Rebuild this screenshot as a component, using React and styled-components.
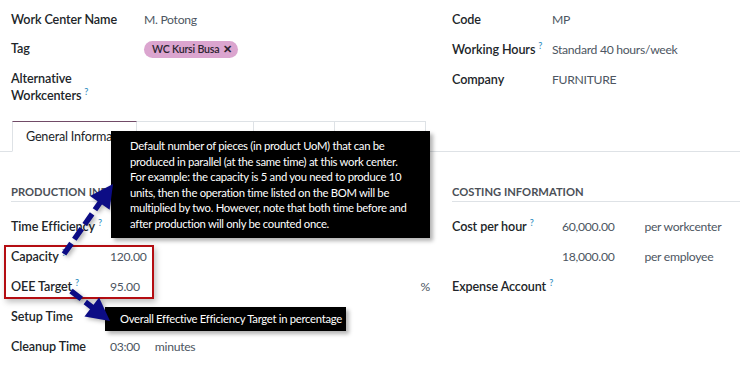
import React from 'react';
import styled, { createGlobalStyle } from 'styled-components';

const GlobalStyle = createGlobalStyle`
  html, body {
    margin: 0;
    padding: 0;
    background: #fff;
  }
  body {
    font-family: Lato, "Noto Sans", sans-serif;
    font-size: 13px;
    color: #212529;
  }
`;

const Page = styled.div`
  position: relative;
  width: 740px;
  height: 367px;
  overflow: hidden;
  padding-top: 11px;
  box-sizing: border-box;
`;

const TopGroup = styled.div`
  display: grid;
  grid-template-columns: 441px 1fr;
  padding-left: 11px;
`;

const FieldList = styled.div`
  display: flex;
  flex-direction: column;
  gap: ${(p) => p.$gap || 12}px;
`;

const Field = styled.div`
  display: grid;
  grid-template-columns: ${(p) => p.$labelWidth}px 1fr auto;
  align-items: start;
  line-height: 17px;
  white-space: nowrap;
`;

const Label = styled.div`
  font-size: 12.6px;
  font-weight: 600;
  letter-spacing: -0.1px;
  color: #212529;
`;

const Value = styled.div`
  font-size: 12.2px;
  letter-spacing: -0.3px;
  color: #4d5662;
`;

const Unit = styled.span`
  font-size: 12.2px;
  letter-spacing: -0.3px;
  color: #4d5662;
  margin-left: ${(p) => p.$gap || 0}px;
`;

const Help = styled.sup`
  font-size: 9px;
  font-weight: 600;
  color: #3a93c4;
  margin-left: 3px;
  vertical-align: top;
  position: relative;
  top: -4px;
`;

const TagPill = styled.span`
  display: inline-flex;
  align-items: center;
  gap: 4px;
  height: 17px;
  padding: 0 6px 0 8px;
  border-radius: 9px;
  background: #dba5cf;
  color: #2b2430;
  font-size: 10.6px;
  letter-spacing: -0.2px;
  font-weight: 600;
`;

const TabNav = styled.div`
  display: flex;
  margin-top: 17px;
  padding-left: 12px;
  border-bottom: 1px solid #dee2e6;
  height: 31px;
  box-sizing: border-box;
`;

const Tab = styled.div`
  width: ${(p) => p.$width}px;
  box-sizing: border-box;
  height: 31px;
  padding: 7px 0 0 13px;
  border: 1px solid #dee2e6;
  border-left: ${(p) => (p.$first ? '1px solid #dee2e6' : 'none')};
  border-top: 1px solid ${(p) => (p.$active ? '#714b67' : '#dee2e6')};
  border-bottom: ${(p) => (p.$active ? '1px solid #fff' : 'none')};
  background: #fff;
  white-space: nowrap;
  overflow: hidden;
  font-size: 12.6px;
  letter-spacing: -0.2px;
  color: #212529;
`;

const InfoGroup = styled.div`
  display: grid;
  grid-template-columns: 419px 288px;
  column-gap: 22px;
  padding-left: 11px;
  margin-top: 31px;
`;

const Section = styled.div`
  display: flex;
  flex-direction: column;
`;

const SectionTitle = styled.div`
  font-size: 11.2px;
  font-weight: 700;
  letter-spacing: 0;
  color: #4b5057;
  line-height: 17px;
  padding-bottom: 1px;
  border-bottom: 1px solid #dee2e6;
  margin-bottom: 16px;
  white-space: nowrap;
`;

const Tooltip = styled.div`
  position: absolute;
  left: ${(p) => p.$left}px;
  top: ${(p) => p.$top}px;
  width: ${(p) => p.$width}px;
  height: ${(p) => p.$height}px;
  box-sizing: border-box;
  background: #000;
  color: #fff;
  font-size: 11.3px;
  letter-spacing: -0.3px;
  line-height: 15.5px;
  white-space: nowrap;
  padding: ${(p) => p.$pad};
  box-shadow: 3px 3px 4px rgba(0, 0, 0, 0.3);
`;

const Highlight = styled.div`
  position: absolute;
  left: 4px;
  top: 245px;
  width: 150px;
  height: 54px;
  box-sizing: border-box;
  border: 2px solid #b40d12;
  box-shadow: 2px 3px 6px rgba(0, 0, 0, 0.25);
`;

const ArrowLayer = styled.svg`
  position: absolute;
  left: 0;
  top: 0;
  pointer-events: none;
  filter: drop-shadow(2px 2px 2px rgba(0, 0, 0, 0.3));
`;

function Arrow({ from, to, head = 22, half = 10 }) {
  const dx = to[0] - from[0];
  const dy = to[1] - from[1];
  const len = Math.hypot(dx, dy);
  const ux = dx / len;
  const uy = dy / len;
  const bx = to[0] - ux * head;
  const by = to[1] - uy * head;
  const px = -uy * half;
  const py = ux * half;
  return (
    <g>
      <line
        x1={from[0]}
        y1={from[1]}
        x2={bx + ux * 2}
        y2={by + uy * 2}
        stroke="#0c0c85"
        strokeWidth="5.5"
        strokeDasharray="13 5"
      />
      <polygon
        points={`${to[0]},${to[1]} ${bx + px},${by + py} ${bx - px},${by - py}`}
        fill="#0c0c85"
      />
    </g>
  );
}

const capacityHelp = [
  'Default number of pieces (in product UoM) that can be',
  'produced in parallel (at the same time) at this work center.',
  'For example: the capacity is 5 and you need to produce 10',
  'units, then the operation time listed on the BOM will be',
  'multiplied by two. However, note that both time before and',
  'after production will only be counted once.',
];

export default function App() {
  return (
    <Page>
      <GlobalStyle />
      <TopGroup>
        <FieldList>
          <Field $labelWidth={133}>
            <Label>Work Center Name</Label>
            <Value>M. Potong</Value>
          </Field>
          <Field $labelWidth={133}>
            <Label>Tag</Label>
            <div>
              <TagPill>
                WC Kursi Busa <span>✕</span>
              </TagPill>
            </div>
          </Field>
          <Field $labelWidth={133}>
            <Label>
              Alternative
              <br />
              Workcenters<Help>?</Help>
            </Label>
            <Value />
          </Field>
        </FieldList>
        <FieldList $gap={13}>
          <Field $labelWidth={100}>
            <Label>Code</Label>
            <Value>MP</Value>
          </Field>
          <Field $labelWidth={100}>
            <Label>
              Working Hours<Help>?</Help>
            </Label>
            <Value>Standard 40 hours/week</Value>
          </Field>
          <Field $labelWidth={100}>
            <Label>Company</Label>
            <Value>FURNITURE</Value>
          </Field>
        </FieldList>
      </TopGroup>

      <TabNav>
        <Tab $width={125} $first $active>General Information</Tab>
        <Tab $width={117}>Specific Capacities</Tab>
        <Tab $width={81}>Description</Tab>
        <Tab $width={91}>Miscellaneous</Tab>
      </TabNav>

      <InfoGroup>
        <Section>
          <SectionTitle>PRODUCTION INFORMATION</SectionTitle>
          <FieldList $gap={12.9}>
            <Field $labelWidth={99}>
              <Label>
                Time Efficiency<Help>?</Help>
              </Label>
              <Value />
            </Field>
            <Field $labelWidth={99}>
              <Label>
                Capacity<Help>?</Help>
              </Label>
              <Value>120.00</Value>
            </Field>
            <Field $labelWidth={99}>
              <Label>
                OEE Target<Help>?</Help>
              </Label>
              <Value>95.00</Value>
              <Unit>%</Unit>
            </Field>
            <Field $labelWidth={99}>
              <Label>Setup Time</Label>
              <Value />
            </Field>
            <Field $labelWidth={99}>
              <Label>Cleanup Time</Label>
              <Value>
                03:00<Unit $gap={15}>minutes</Unit>
              </Value>
            </Field>
          </FieldList>
        </Section>
        <Section>
          <SectionTitle>COSTING INFORMATION</SectionTitle>
          <FieldList $gap={12.9}>
            <Field $labelWidth={110}>
              <Label>
                Cost per hour<Help>?</Help>
              </Label>
              <Value>
                60,000.00<Unit $gap={30}>per workcenter</Unit>
              </Value>
            </Field>
            <Field $labelWidth={110}>
              <Label />
              <Value>
                18,000.00<Unit $gap={30}>per employee</Unit>
              </Value>
            </Field>
            <Field $labelWidth={110}>
              <Label>
                Expense Account<Help>?</Help>
              </Label>
              <Value />
            </Field>
          </FieldList>
        </Section>
      </InfoGroup>

      <Highlight />

      <Tooltip $left={111} $top={131} $width={319} $height={107} $pad="7px 10px 8px 19px">
        {capacityHelp.map((line) => (
          <div key={line}>{line}</div>
        ))}
      </Tooltip>

      <Tooltip $left={105} $top={307} $width={241} $height={24} $pad="4px 0 4px 15px">
        Overall Effective Efficiency Target in percentage
      </Tooltip>

      <ArrowLayer width="740" height="367" viewBox="0 0 740 367">
        <Arrow from={[64, 254]} to={[113, 184]} head={23} half={12} />
        <Arrow from={[71, 291]} to={[110, 321]} head={23} half={12} />
      </ArrowLayer>
    </Page>
  );
}
